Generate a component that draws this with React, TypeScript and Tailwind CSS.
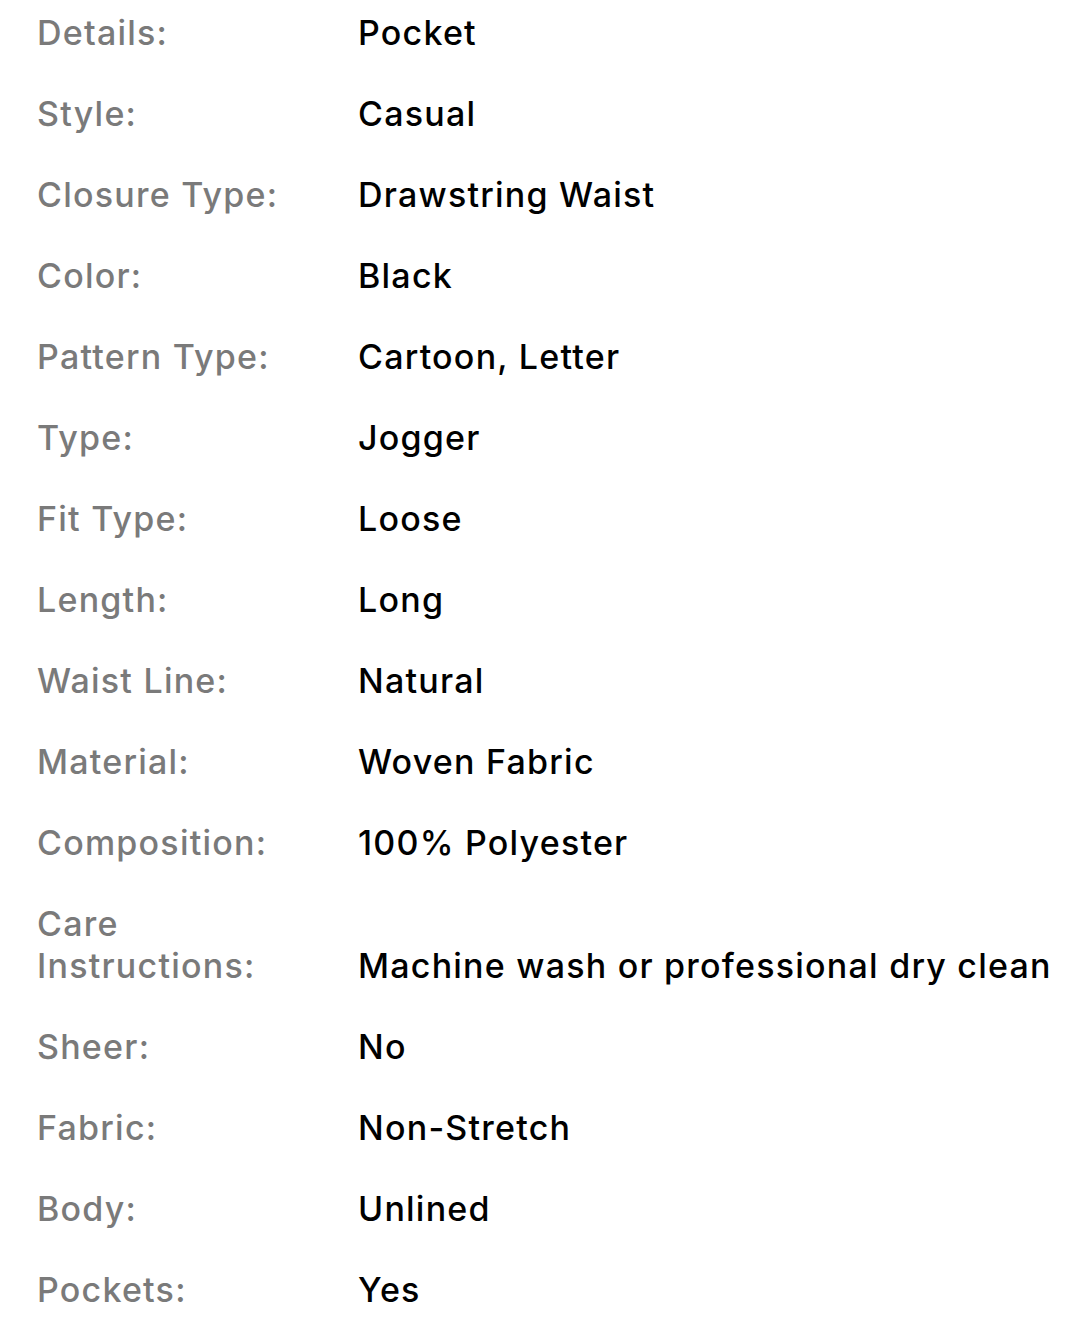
import React from "react";

const rows: [string, string][] = [
  ["Details:", "Pocket"],
  ["Style:", "Casual"],
  ["Closure Type:", "Drawstring Waist"],
  ["Color:", "Black"],
  ["Pattern Type:", "Cartoon, Letter"],
  ["Type:", "Jogger"],
  ["Fit Type:", "Loose"],
  ["Length:", "Long"],
  ["Waist Line:", "Natural"],
  ["Material:", "Woven Fabric"],
  ["Composition:", "100% Polyester"],
  ["Care Instructions:", "Machine wash or professional dry clean"],
  ["Sheer:", "No"],
  ["Fabric:", "Non-Stretch"],
  ["Body:", "Unlined"],
  ["Pockets:", "Yes"],
];

export default function App() {
  return (
    <div className="min-h-screen bg-white font-['Inter',sans-serif] pt-[12px] pl-[37px]">
      <dl className="flex flex-col gap-[39px] text-[34px] leading-[42px] font-medium tracking-[0.036em]">
        {rows.map(([label, value]) => (
          <div key={label} className="grid grid-cols-[285px_1fr] gap-x-[36px] items-end">
            <dt className="text-[#7a7a7a]">{label}</dt>
            <dd className="text-black whitespace-nowrap">{value}</dd>
          </div>
        ))}
      </dl>
    </div>
  );
}
